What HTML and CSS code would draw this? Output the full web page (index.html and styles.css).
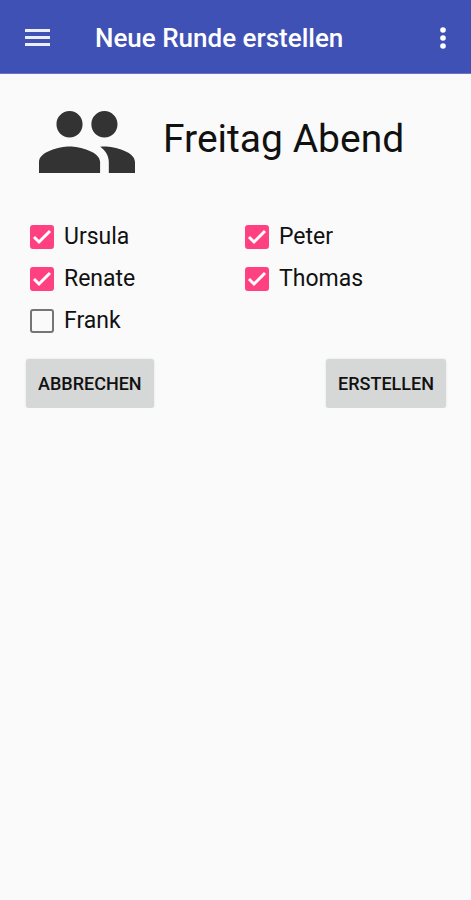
FILE: index.html
```html
<!DOCTYPE html>
<html lang="de">
<head>
<meta charset="utf-8">
<meta name="viewport" content="width=device-width, initial-scale=1">
<title>Neue Runde erstellen</title>
<link rel="stylesheet" href="styles.css">
</head>
<body>
<header class="app-bar">
  <button class="icon-button" type="button" aria-label="Menü">
    <svg width="26" height="18" viewBox="0 0 26 18" fill="currentColor" opacity="0.9"><path d="M0 0h25v3H0zM0 7h25v3H0zM0 14h25v3H0z"/></svg>
  </button>
  <h1 class="app-title">Neue Runde erstellen</h1>
  <button class="icon-button" type="button" aria-label="Weitere Optionen">
    <svg width="6" height="22" viewBox="0 0 6 22" fill="currentColor"><circle cx="3" cy="3" r="2.8"/><circle cx="3" cy="11" r="2.8"/><circle cx="3" cy="19" r="2.8"/></svg>
  </button>
</header>
<main>
  <form class="round-form">
    <div class="round-head">
      <svg class="group-icon" width="96" height="62" viewBox="1 5 22 14" preserveAspectRatio="none" aria-hidden="true"><path d="M16 11c1.66 0 2.99-1.34 2.99-3S17.66 5 16 5c-1.66 0-3 1.34-3 3s1.34 3 3 3zm-8 0c1.66 0 2.99-1.34 2.99-3S9.66 5 8 5C6.34 5 5 6.34 5 8s1.34 3 3 3zm0 2c-2.33 0-7 1.17-7 3.5V19h14v-2.5c0-2.33-4.67-3.5-7-3.5zm8 0c-.29 0-.62.02-.97.05 1.16.84 1.97 1.97 1.97 3.45V19h6v-2.5c0-2.33-4.67-3.5-7-3.5z"/></svg>
      <h2 class="round-name">Freitag Abend</h2>
    </div>
    <div class="players">
      <label class="player"><input class="check" type="checkbox" checked>Ursula</label>
      <label class="player"><input class="check" type="checkbox" checked>Peter</label>
      <label class="player"><input class="check" type="checkbox" checked>Renate</label>
      <label class="player"><input class="check" type="checkbox" checked>Thomas</label>
      <label class="player"><input class="check" type="checkbox">Frank</label>
    </div>
    <div class="actions">
      <button class="action" type="button">ABBRECHEN</button>
      <button class="action" type="button">ERSTELLEN</button>
    </div>
  </form>
</main>
</body>
</html>
```
FILE: styles.css
```css
* {
  box-sizing: border-box;
}

body {
  margin: 0;
  background: #fafafa;
  color: #111;
  font-family: Roboto, "Liberation Sans", sans-serif;
}

.app-bar {
  display: flex;
  align-items: center;
  height: 74px;
  padding: 2px 25px 0;
  background: #3f51b5;
  border-bottom: 1px solid #6875c3;
  color: #fff;
}

.icon-button {
  display: flex;
  padding: 0;
  border: 0;
  background: none;
  color: inherit;
}

.app-title {
  flex: 1;
  margin: 0 0 0 44px;
  font-size: 26px;
  line-height: 32px;
  font-weight: 500;
}

.round-form {
  padding: 37px 25px 0 26px;
}

.round-head {
  display: flex;
  align-items: center;
  gap: 28px;
  padding-left: 13px;
}

.group-icon {
  flex: none;
  fill: #333;
}

.round-name {
  margin: 0 0 6px;
  font-size: 39px;
  line-height: 48px;
  font-weight: 400;
}

.players {
  display: grid;
  grid-template-columns: 1fr 1fr;
  margin-top: 43px;
  padding-left: 4px;
  column-gap: 14px;
}

.player {
  display: flex;
  align-items: center;
  gap: 10px;
  height: 42px;
  font-size: 23px;
  line-height: 28px;
}

.check {
  appearance: none;
  flex: none;
  width: 24px;
  height: 24px;
  margin: 0;
  border: 2px solid #757575;
  border-radius: 3px;
}

.check:checked {
  border-color: #ff4081;
  background: #ff4081 url("data:image/svg+xml,%3Csvg xmlns='http://www.w3.org/2000/svg' viewBox='0 0 20 20'%3E%3Cpath d='M2 10l5 5L18 4' fill='none' stroke='white' stroke-width='3'/%3E%3C/svg%3E") center / 20px 20px no-repeat;
}

.actions {
  display: flex;
  justify-content: space-between;
  margin-top: 17px;
}

.action {
  height: 49px;
  padding: 0 12px;
  border: 0;
  border-radius: 3px;
  background: #d6d8d7;
  box-shadow: 0 0 2px #d6d8d7;
  color: #111;
  font: 500 18px/24px Roboto, "Liberation Sans", sans-serif;
}
```
